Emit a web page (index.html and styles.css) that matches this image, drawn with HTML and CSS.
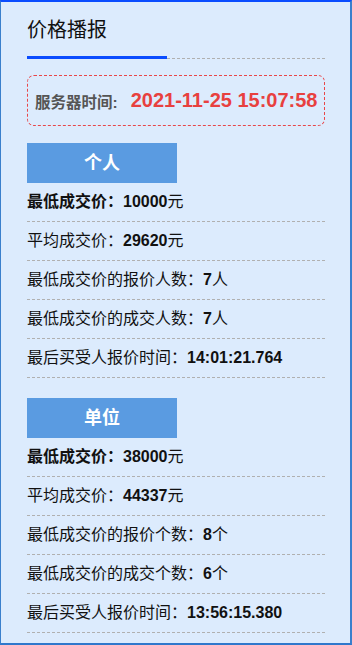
FILE: index.html
```html
<!DOCTYPE html>
<html lang="zh-CN">
<head>
<meta charset="utf-8">
<title>价格播报</title>
<link rel="stylesheet" href="styles.css">
</head>
<body>
<div class="panel">
  <div class="tab-head"><span class="tab-title">价格播报</span></div>
  <div class="server-time"><span class="st-label">服务器时间:</span><span class="st-value">2021-11-25 15:07:58</span></div>

  <div class="section">
    <div class="sec-btn">个人</div>
    <div class="row"><strong>最低成交价：</strong><b>10000</b>元</div>
    <div class="row">平均成交价：<b>29620</b>元</div>
    <div class="row">最低成交价的报价人数：<b>7</b>人</div>
    <div class="row">最低成交价的成交人数：<b>7</b>人</div>
    <div class="row">最后买受人报价时间：<b>14:01:21.764</b></div>
  </div>

  <div class="section">
    <div class="sec-btn">单位</div>
    <div class="row"><strong>最低成交价：</strong><b>38000</b>元</div>
    <div class="row">平均成交价：<b>44337</b>元</div>
    <div class="row">最低成交价的报价个数：<b>8</b>个</div>
    <div class="row">最低成交价的成交个数：<b>6</b>个</div>
    <div class="row">最后买受人报价时间：<b>13:56:15.380</b></div>
  </div>
</div>
</body>
</html>
```
FILE: styles.css
```css
html, body {
  margin: 0;
  padding: 0;
  background: #5a7386;
}
body {
  font-family: "Liberation Sans", "Noto Sans CJK SC", sans-serif;
  color: #111;
}
.panel {
  box-sizing: border-box;
  width: 352px;
  height: 645px;
  background: #dcebfd;
  border-top: 2px solid #0a4cff;
  border-left: 1px solid #3a7fcc;
  border-right: 2px solid #3a7fcc;
  border-bottom: 2px solid #2f78cc;
  padding: 0 25px 0 26px;
  overflow: hidden;
}
.tab-head {
  border-bottom: 1px dashed #b0b0b0;
  padding-top: 14px;
  height: 42px;
}
.tab-title {
  display: inline-block;
  width: 140px;
  font-size: 20px;
  line-height: 28px;
  padding-bottom: 12px;
  border-bottom: 3px solid #0a4cff;
  color: #111;
}
.server-time {
  margin-top: 16px;
  height: 49px;
  border: 1px dashed #e8474a;
  border-radius: 7px;
  display: flex;
  align-items: center;
  padding-left: 7px;
  gap: 13px;
}
.st-label {
  font-size: 15.5px;
  font-weight: bold;
  color: #555;
}
.st-value {
  font-size: 20px;
  font-weight: bold;
  color: #e8403f;
}
.section {
  margin-top: 17px;
}
.section + .section {
  margin-top: 20px;
}
.sec-btn {
  width: 150px;
  height: 40px;
  line-height: 40px;
  text-align: center;
  background: #5a9be1;
  color: #fff;
  font-size: 18px;
  font-weight: bold;
}
.row {
  height: 38px;
  line-height: 37px;
  border-bottom: 1px dashed #b0b0b0;
  font-size: 16px;
  color: #111;
}
.row strong,
.row b {
  font-weight: bold;
}
```
